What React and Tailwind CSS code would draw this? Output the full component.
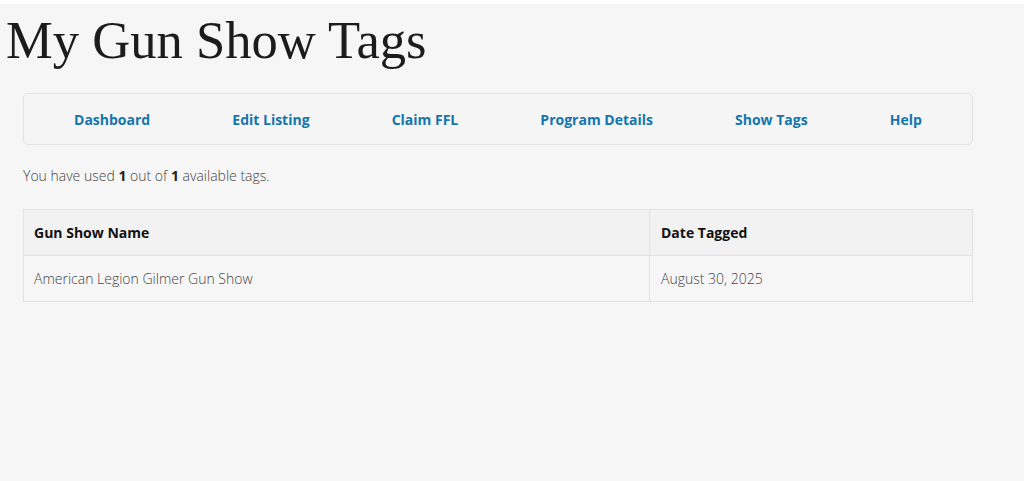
const navItems = ["Dashboard", "Edit Listing", "Claim FFL", "Program Details", "Show Tags", "Help"];

const rows = [{ name: "American Legion Gilmer Gun Show", date: "August 30, 2025" }];

export default function App() {
  return (
    <div className="min-h-[481px] bg-[#f6f6f6] border-t-4 border-white" style={{ fontFamily: '"Open Sans", "Noto Sans", sans-serif' }}>
      {/* Title */}
      <h1
        className="pl-[6px] pt-[6px] text-[52.6px] leading-[60px] text-[#1c1c1c]"
        style={{ fontFamily: '"Liberation Serif", "DejaVu Serif", serif' }}
      >
        My Gun Show Tags
      </h1>

      <div className="px-[23px] mt-[23px] w-[996px]">
        {/* Nav */}
        <nav className="flex justify-around items-center h-[52px] px-[9px] border border-[#e2e2e2] rounded-[5px] bg-[#f5f5f5]">
          {navItems.map((item) => (
            <a key={item} href="#" className="text-[14px] font-bold text-[#1476ad]">
              {item}
            </a>
          ))}
        </nav>

        <p className="mt-[20px] text-[14px] text-[#444] font-light">
          You have used <b className="font-bold text-[#222]">1</b> out of <b className="font-bold text-[#222]">1</b> available tags.
        </p>

        {/* Tags table */}
        <table className="mt-[23px] w-full border-collapse text-[14px]">
          <thead>
            <tr className="bg-[#f2f2f2]">
              <th className="h-[46px] w-[626px] border border-[#e2e2e2] px-[10px] text-left font-bold text-[#111]">Gun Show Name</th>
              <th className="h-[46px] border border-[#e2e2e2] px-[11px] text-left font-bold text-[#111]">Date Tagged</th>
            </tr>
          </thead>
          <tbody>
            {rows.map((r) => (
              <tr key={r.name}>
                <td className="h-[46px] border border-[#e2e2e2] px-[10px] text-[#444] font-light">{r.name}</td>
                <td className="h-[46px] border border-[#e2e2e2] px-[11px] text-[#444] font-light">{r.date}</td>
              </tr>
            ))}
          </tbody>
        </table>
      </div>
    </div>
  );
}
